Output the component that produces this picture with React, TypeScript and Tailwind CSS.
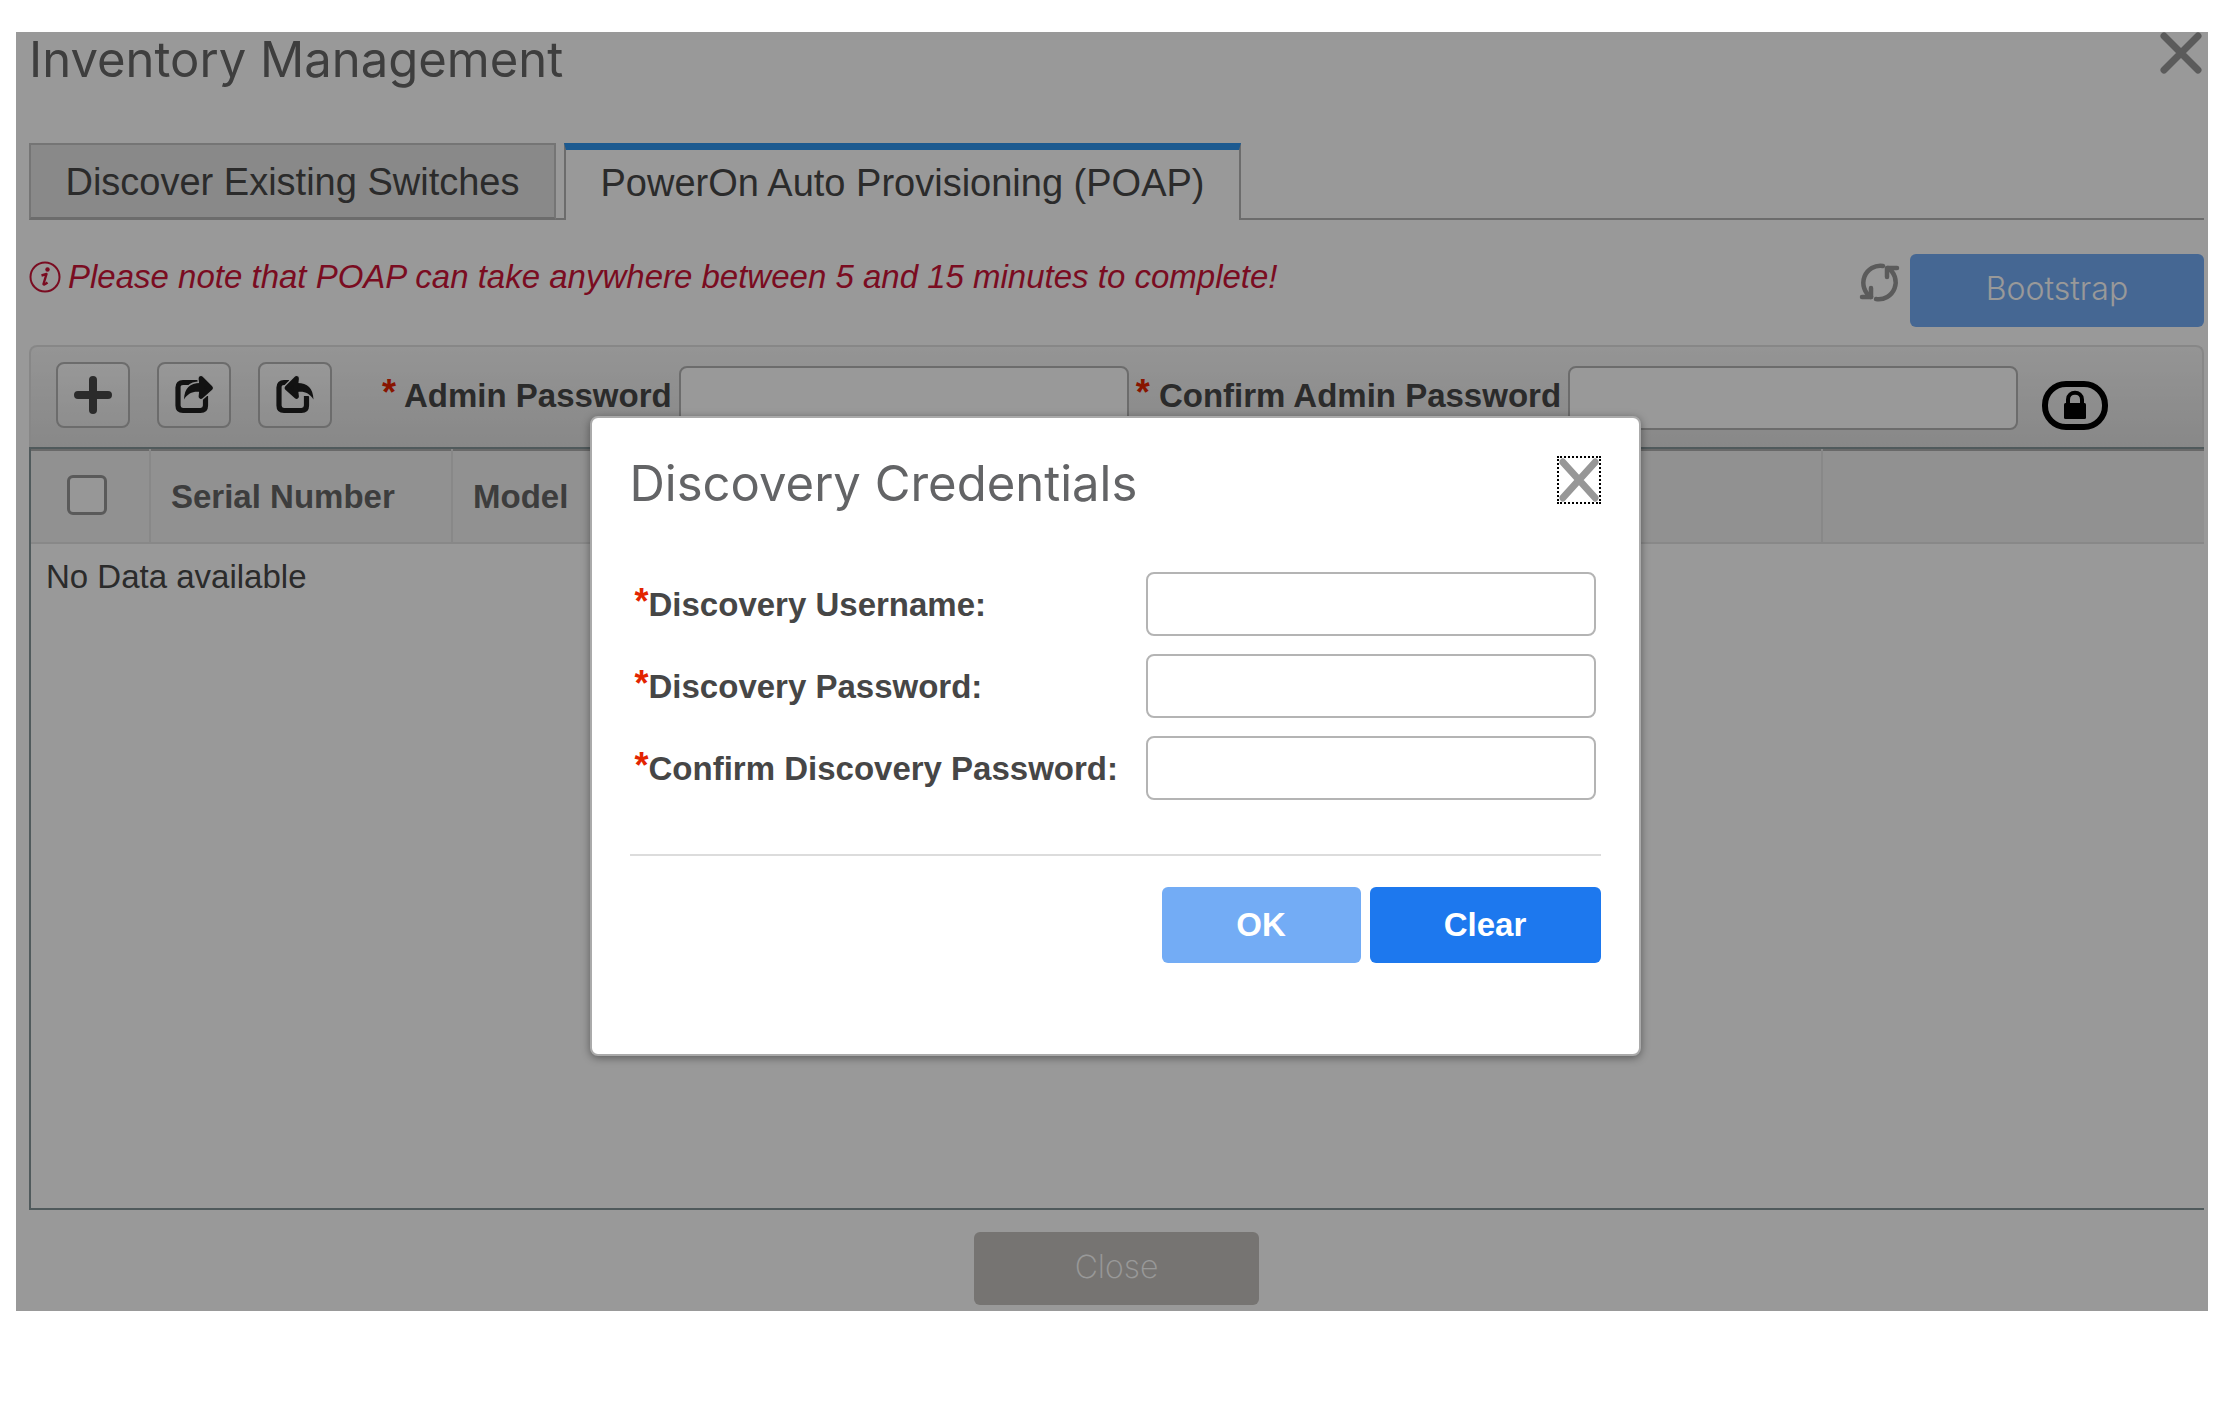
import React from "react";

const ARROW_BODY = "M10 24.500C10.500 13 16 8 26 8L34 13L26 17C19.500 16 14 18 10 24.500Z";
const ARROW_HEAD = "M27 3.500L36.500 13L27 21.500L28 13Z";

function ExportIcon({ flipped = false }: { flipped?: boolean }) {
  return (
    <svg width="40" height="40" viewBox="0 0 40 40" strokeLinejoin="round" aria-hidden="true">
      <path
        d={
          flipped
            ? "M14 7.500H9Q4 7.500 4 12.500V30.500Q4 35.500 9 35.500H26.500Q31.500 35.500 31.500 30.500V21"
            : "M24 7.500H9Q4 7.500 4 12.500V30.500Q4 35.500 9 35.500H26.500Q31.500 35.500 31.500 30.500V21"
        }
        fill="none"
        stroke="#1e1e1e"
        strokeWidth="5.200"
      />
      <g transform={flipped ? "translate(48.500 0) scale(-1 1)" : undefined}>
        <path d={ARROW_BODY} fill="#f4f4f4" stroke="#f4f4f4" strokeWidth="3" />
        <path d={ARROW_HEAD} fill="#f4f4f4" stroke="#f4f4f4" strokeWidth="7.500" />
        <path d={ARROW_BODY} fill="#1e1e1e" />
        <path d={ARROW_HEAD} fill="#1e1e1e" stroke="#1e1e1e" strokeWidth="4.800" />
      </g>
    </svg>
  );
}

function CloseIcon({ className, color }: { className: string; color: string }) {
  return (
    <svg className={className} viewBox="0 0 42 42" preserveAspectRatio="none" aria-hidden="true">
      <path d="M4 4L38 38M38 4L4 38" stroke={color} strokeWidth="7" strokeLinecap="round" />
    </svg>
  );
}

function ToolButton({ label, children }: { label: string; children: React.ReactNode }) {
  return (
    <button
      type="button"
      aria-label={label}
      className="flex h-[66px] w-[74px] items-center justify-center rounded-lg border-2 border-[#b4b4b4] bg-gradient-to-b from-[#fdfdfd] to-[#ececec]"
    >
      {children}
    </button>
  );
}

const inputClass = "h-16 w-[450px] rounded-lg border-2 border-[#b4b4b4] bg-white px-4 text-[33px]";

function RequiredMark() {
  return <span className="align-[2px] text-[36px] leading-9 text-[#e32400]">*</span>;
}

function AdminField({ id, label }: { id: string; label: string }) {
  return (
    <div className="flex items-center gap-[7px]">
      <label htmlFor={id} className="whitespace-nowrap leading-10">
        <RequiredMark /> {label}
      </label>
      <input id={id} type="password" className={`${inputClass} mt-1.5`} />
    </div>
  );
}

function CredentialField({ id, label, type }: { id: string; label: string; type: string }) {
  return (
    <div className="flex items-center justify-between">
      <label htmlFor={id} className="whitespace-nowrap leading-10">
        <RequiredMark />
        {label}
      </label>
      <input id={id} type={type} className={inputClass} />
    </div>
  );
}

function CredentialsDialog() {
  return (
    <div
      role="dialog"
      aria-labelledby="dialog-title"
      className="w-[1051px] rounded-lg border-2 border-[#aaaaaa] bg-white px-[38px] pt-[38px] pb-[91px] shadow-[0_2px_8px_rgba(0,0,0,0.4)]"
    >
      <div className="flex items-start justify-between">
        <h2 id="dialog-title" className="font-['Inter',sans-serif] text-[49px] leading-14 text-[#636466]">
          Discovery Credentials
        </h2>
        <button type="button" aria-label="Close dialog" className="flex h-12 w-11 items-center justify-center border-2 border-dotted border-black">
          <CloseIcon className="h-[44px] w-[42px]" color="#979797" />
        </button>
      </div>
      <form className="mt-[60px] flex flex-col gap-[18px] pr-[5px] pl-[5px] text-[33px] font-bold text-[#464646]">
        <CredentialField id="discovery-username" label="Discovery Username:" type="text" />
        <CredentialField id="discovery-password" label="Discovery Password:" type="password" />
        <CredentialField id="confirm-discovery-password" label="Confirm Discovery Password:" type="password" />
      </form>
      <div className="mt-[54px] flex justify-end gap-[9px] border-t-2 border-[#dcdcdc] pt-[31px] text-[33px] font-bold text-white">
        <button type="button" className="h-[76px] w-[199px] rounded-md bg-[#73acf5]">
          OK
        </button>
        <button type="button" className="h-[76px] w-[231px] rounded-md bg-[#1d78ee]">
          Clear
        </button>
      </div>
    </div>
  );
}

export default function App() {
  return (
    <div className="min-h-screen bg-white pt-8 pr-[25px] pl-4 font-['Liberation_Sans',Arial,sans-serif]">
      <main className="relative bg-white pr-1 pb-[6px] pl-[13px]">
        <header className="flex items-start justify-between pr-0.5">
          <h1 className="font-['Inter',sans-serif] text-[49px] leading-14 text-[#686868]">Inventory Management</h1>
          <button type="button" aria-label="Close window">
            <CloseIcon className="h-[42px] w-[42px]" color="#989898" />
          </button>
        </header>

        <div role="tablist" className="mt-[55px] flex h-[77px] text-[38px] text-[#484848]">
          <button type="button" role="tab" aria-selected="false" className="w-[527px] border-2 border-b-[3px] border-[#c4c4c4] border-b-[#b4b4b4] bg-[#e5e5e5] pt-0.5">
            Discover Existing Switches
          </button>
          <div className="w-2 border-b-2 border-[#b4b4b4]" />
          <button type="button" role="tab" aria-selected="true" className="w-[677px] border-x-2 border-t-[7px] border-[#b4b4b4] border-t-[#2f96f0] pb-1">
            PowerOn Auto Provisioning (POAP)
          </button>
          <div className="grow border-b-2 border-[#b4b4b4]" />
        </div>

        <div className="mt-[34px] flex items-start">
          <p className="mt-[3px] flex grow items-center gap-[7px] text-[33px] leading-10 text-[#cc1538] italic">
            <svg width="32" height="32" viewBox="0 0 32 32" fill="none" aria-hidden="true">
              <circle cx="16" cy="16" r="14.500" stroke="#cc1538" strokeWidth="2" />
              <circle cx="18.500" cy="8.500" r="2.200" fill="#cc1538" />
              <path d="M12.500 14.500L17.500 13L14.500 23Q14.500 24.500 18.500 21.500" stroke="#cc1538" strokeWidth="2.400" strokeLinejoin="round" />
            </svg>
            Please note that POAP can take anywhere between 5 and 15 minutes to complete!
          </p>
          <button type="button" aria-label="Refresh" className="mt-[9px] mr-[9px]">
            <svg width="42" height="40" viewBox="0 0 42 40" fill="none" stroke="#989898" strokeWidth="4.500" strokeLinecap="round" strokeLinejoin="round" aria-hidden="true">
              <path d="M24 3A17 17 0 0 0 12 34" />
              <path d="M3 34H12V25" />
              <path d="M17 36A17 17 0 0 0 29 5" />
              <path d="M38 5H28V14" />
            </svg>
          </button>
          <button type="button" className="h-[73px] w-[294px] rounded-md bg-[#73acf5] pb-1 font-['Inter',sans-serif] text-[32px] font-light text-white">
            Bootstrap
          </button>
        </div>

        <section className="mt-[18px]">
          <div className="flex h-[102px] items-center rounded-t-lg border-2 border-b-0 border-[#e2e2e2] bg-gradient-to-b from-[#f8f8f8] to-[#e3e3e3] pb-1 pl-[25px] text-[33px] font-bold text-[#484848]">
            <div className="flex gap-[27px]">
              <ToolButton label="Add">
                <svg width="40" height="40" viewBox="0 0 40 40" aria-hidden="true">
                  <path d="M20 5V35M5 20H35" stroke="#484848" strokeWidth="8" strokeLinecap="round" />
                </svg>
              </ToolButton>
              <ToolButton label="Export">
                <ExportIcon />
              </ToolButton>
              <ToolButton label="Import">
                <ExportIcon flipped />
              </ToolButton>
            </div>
            <div className="ml-[50px] flex gap-[7px]">
              <AdminField id="admin-password" label="Admin Password" />
              <AdminField id="confirm-admin-password" label="Confirm Admin Password" />
            </div>
            <button type="button" aria-label="Discovery credentials" className="mt-5 ml-6 flex h-[49px] w-[66px] items-center justify-center rounded-3xl border-6 border-black">
              <svg width="24" height="30" viewBox="0 0 24 30" aria-hidden="true">
                <path d="M5 14V9.500C5 0.500 19 0.500 19 9.500V14" fill="none" stroke="#000" strokeWidth="4" />
                <rect x="1" y="13" width="22" height="16" rx="1.500" fill="#000" />
              </svg>
            </button>
          </div>

          <div className="h-[763px] border-y-2 border-l-2 border-[#86969a]">
            <table className="w-full table-fixed border-collapse text-[33px]">
              <thead>
                <tr className="h-[93px] border-t-2 border-b-2 border-t-[#b0b0b0] border-b-[#e3e3e3] bg-[#f2f2f2] text-left text-[#666666]">
                  <th className="w-[119px] border-r-2 border-[#e3e3e3] pb-1 pl-9 text-left">
                    <input type="checkbox" aria-label="Select all" className="block h-10 w-10 appearance-none rounded-md border-3 border-[#969696] bg-[#fcfcfc]" />
                  </th>
                  <th className="w-[302px] border-r-2 border-[#e3e3e3] pl-5">Serial Number</th>
                  <th className="border-r-2 border-[#e3e3e3] pl-5">Model</th>
                  <th className="w-[382px]" />
                </tr>
              </thead>
              <tbody>
                <tr>
                  <td colSpan={4} className="pt-2 pl-[15px] text-[#484848]">
                    No Data available
                  </td>
                </tr>
              </tbody>
            </table>
          </div>
        </section>

        <footer className="mt-[22px] flex justify-center">
          <button type="button" className="h-[73px] w-[285px] rounded-md bg-[#c5c2be] pb-1 font-['Inter',sans-serif] text-[32px] font-extralight text-white">
            Close
          </button>
        </footer>

        <div className="absolute inset-0 flex items-start justify-center bg-black/40 pt-[384px] pl-1.5">
          <CredentialsDialog />
        </div>
      </main>
    </div>
  );
}
